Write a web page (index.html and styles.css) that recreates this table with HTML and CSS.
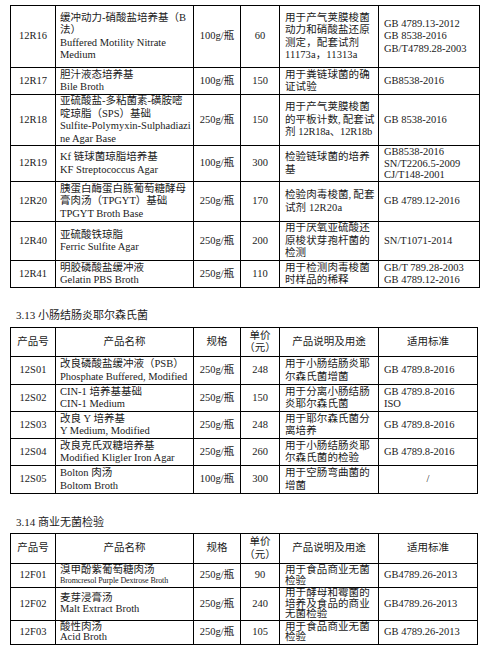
FILE: index.html
```html
<!DOCTYPE html>
<html lang="zh-CN">
<head>
<meta charset="utf-8">
<title>培养基产品目录</title>
<link rel="stylesheet" href="styles.css">
</head>
<body>
<div class="page">
  <table class="cat wide">
    <colgroup><col class="c1"><col class="c2"><col class="c3"><col class="c4"><col class="c5"><col class="c6"></colgroup>
    <tr class="h62">
      <td class="ctr">12R16</td>
      <td class="name">缓冲动力-硝酸盐培养基（B<br>法）<br>Buffered Motility Nitrate<br>Medium</td>
      <td class="ctr">100g/瓶</td>
      <td class="ctr">60</td>
      <td class="desc">用于产气荚膜梭菌<br>动力和硝酸盐还原<br>测定，配套试剂<br>11173a，11313a</td>
      <td class="std">GB 4789.13-2012<br>GB 8538-2016<br>GB/T4789.28-2003</td>
    </tr>
    <tr class="h27">
      <td class="ctr">12R17</td>
      <td class="name">胆汁液态培养基<br>Bile Broth</td>
      <td class="ctr">100g/瓶</td>
      <td class="ctr">150</td>
      <td class="desc">用于粪链球菌的确<br>证试验</td>
      <td class="std">GB8538-2016</td>
    </tr>
    <tr class="h51">
      <td class="ctr">12R18</td>
      <td class="name">亚硫酸盐-多粘菌素-磺胺嘧<br>啶琼脂（SPS）基础<br>Sulfite-Polymyxin-Sulphadiazi<br>ne Agar Base</td>
      <td class="ctr">250g/瓶</td>
      <td class="ctr">150</td>
      <td class="desc">用于产气荚膜梭菌<br>的平板计数<span class="nc">,</span>配套试<br>剂 <span class="lat">12R18a、12R18b</span></td>
      <td class="std">GB 8538-2016</td>
    </tr>
    <tr class="h36">
      <td class="ctr">12R19</td>
      <td class="name">Kf 链球菌琼脂培养基<br>KF Streptococcus Agar</td>
      <td class="ctr">100g/瓶</td>
      <td class="ctr">300</td>
      <td class="desc">检验链球菌的培养<br>基</td>
      <td class="std tight">GB8538-2016<br>SN/T2206.5-2009<br>CJ/T148-2001</td>
    </tr>
    <tr class="h40">
      <td class="ctr">12R20</td>
      <td class="name">胰蛋白酶蛋白胨葡萄糖酵母<br>膏肉汤（TPGYT）基础<br>TPGYT Broth Base</td>
      <td class="ctr">250g/瓶</td>
      <td class="ctr">170</td>
      <td class="desc">检验肉毒梭菌<span class="nc">,</span>配套<br>试剂 12R20a</td>
      <td class="std">GB 4789.12-2016</td>
    </tr>
    <tr class="h39">
      <td class="ctr">12R40</td>
      <td class="name">亚硫酸铁琼脂<br>Ferric Sulfite Agar</td>
      <td class="ctr">250g/瓶</td>
      <td class="ctr">200</td>
      <td class="desc">用于厌氧亚硫酸还<br>原梭状芽孢杆菌的<br>检测</td>
      <td class="std">SN/T1071-2014</td>
    </tr>
    <tr class="h27">
      <td class="ctr">12R41</td>
      <td class="name">明胶磷酸盐缓冲液<br>Gelatin PBS Broth</td>
      <td class="ctr">250g/瓶</td>
      <td class="ctr">110</td>
      <td class="desc">用于检测肉毒梭菌<br>时样品的稀释</td>
      <td class="std">GB/T 789.28-2003<br>GB 4789.12-2016</td>
    </tr>
  </table>

  <h2 class="sec s1">3.13 小肠结肠炎耶尔森氏菌</h2>
  <table class="cat">
    <colgroup><col class="c1"><col class="c2"><col class="c3"><col class="c4"><col class="c5"><col class="c6"></colgroup>
    <tr class="h29 head">
      <td>产品号</td>
      <td>产品名称</td>
      <td>规格</td>
      <td>单价<br>（元）</td>
      <td>产品说明及用途</td>
      <td>适用标准</td>
    </tr>
    <tr class="h28">
      <td class="ctr">12S01</td>
      <td class="name">改良磷酸盐缓冲液（PSB）<br>Phosphate Buffered, Modified</td>
      <td class="ctr">250g/瓶</td>
      <td class="ctr">248</td>
      <td class="desc">用于小肠结肠炎耶<br>尔森氏菌增菌</td>
      <td class="std">GB 4789.8-2016</td>
    </tr>
    <tr class="h27">
      <td class="ctr">12S02</td>
      <td class="name">CIN-1 培养基基础<br>CIN-1 Medium</td>
      <td class="ctr">250g/瓶</td>
      <td class="ctr">150</td>
      <td class="desc">用于分离小肠结肠<br>炎耶尔森氏菌</td>
      <td class="std">GB 4789.8-2016<br>ISO</td>
    </tr>
    <tr class="h27">
      <td class="ctr">12S03</td>
      <td class="name">改良 Y 培养基<br>Y Medium, Modified</td>
      <td class="ctr">250g/瓶</td>
      <td class="ctr">248</td>
      <td class="desc">用于耶尔森氏菌分<br>离培养</td>
      <td class="std">GB 4789.8-2016</td>
    </tr>
    <tr class="h27">
      <td class="ctr">12S04</td>
      <td class="name">改良克氏双糖培养基<br>Modified Kligler Iron Agar</td>
      <td class="ctr">250g/瓶</td>
      <td class="ctr">260</td>
      <td class="desc">用于小肠结肠炎耶<br>尔森氏菌的检验</td>
      <td class="std">GB 4789.8-2016</td>
    </tr>
    <tr class="h28">
      <td class="ctr">12S05</td>
      <td class="name">Bolton 肉汤<br>Boltom Broth</td>
      <td class="ctr">100g/瓶</td>
      <td class="ctr">300</td>
      <td class="desc">用于空肠弯曲菌的<br>增菌</td>
      <td class="std slash">/</td>
    </tr>
  </table>

  <h2 class="sec s2">3.14 商业无菌检验</h2>
  <table class="cat">
    <colgroup><col class="c1"><col class="c2"><col class="c3"><col class="c4"><col class="c5"><col class="c6"></colgroup>
    <tr class="h30 head">
      <td>产品号</td>
      <td>产品名称</td>
      <td>规格</td>
      <td>单价<br>（元）</td>
      <td>产品说明及用途</td>
      <td>适用标准</td>
    </tr>
    <tr class="h24 tightrow">
      <td class="ctr">12F01</td>
      <td class="name">溴甲酚紫葡萄糖肉汤<br><span class="small">Bromcresol Purple Dextrose Broth</span></td>
      <td class="ctr">250g/瓶</td>
      <td class="ctr">90</td>
      <td class="desc">用于食品商业无菌<br>检验</td>
      <td class="std">GB4789.26-2013</td>
    </tr>
    <tr class="h32 tightrow">
      <td class="ctr">12F02</td>
      <td class="name">麦芽浸膏汤<br>Malt Extract Broth</td>
      <td class="ctr">250g/瓶</td>
      <td class="ctr">240</td>
      <td class="desc">用于酵母和霉菌的<br>培养及食品的商业<br>无菌检验</td>
      <td class="std">GB4789.26-2013</td>
    </tr>
    <tr class="h24 tightrow">
      <td class="ctr">12F03</td>
      <td class="name">酸性肉汤<br>Acid Broth</td>
      <td class="ctr">250g/瓶</td>
      <td class="ctr">105</td>
      <td class="desc">用于食品商业无菌<br>检验</td>
      <td class="std">GB 4789.26-2013</td>
    </tr>
  </table>
</div>
</body>
</html>
```

FILE: styles.css
```css
html, body {
  margin: 0;
  padding: 0;
  background: #ffffff;
}

body {
  font-family: "Liberation Serif", "Noto Sans CJK SC", serif;
  color: #1a1a1a;
  font-size: 10.5px;
}

.page {
  padding: 5px 0 0 10px;
}

.cat {
  border-collapse: collapse;
  table-layout: fixed;
  width: 468px;
}

.cat.wide {
  width: 470px;
}

.c1 { width: 45px; }
.c2 { width: 138px; }
.c3 { width: 47px; }
.c4 { width: 39px; }
.c5 { width: 99px; }

.cat td {
  border: 1px solid #000;
  padding: 0 4px;
  vertical-align: middle;
  line-height: 12.5px;
  overflow: visible;
  white-space: nowrap;
}

.cat td.ctr {
  text-align: center;
  padding: 0;
}

.cat td.name {
  padding-left: 4px;
  padding-right: 0;
}

.cat td.desc {
  padding-left: 5px;
  padding-right: 0;
  letter-spacing: 0.1px;
}

.lat {
  letter-spacing: -0.2px;
}

.nc {
  margin-right: 2px;
}

.cat td.std {
  padding-left: 5px;
  padding-right: 0;
}

.cat td.slash {
  text-align: center;
  padding-left: 0;
}

.cat td.tight {
  line-height: 11.5px;
}

.head td {
  text-align: center;
  padding: 0;
}

.tightrow td {
  line-height: 10.5px;
}

.small {
  font-size: 8px;
  letter-spacing: -0.1px;
}

.h24 { height: 24px; }
.h27 { height: 27px; }
.h28 { height: 28px; }
.h29 { height: 29px; }
.h30 { height: 30px; }
.h32 { height: 32px; }
.h36 { height: 36px; }
.h39 { height: 39px; }
.h40 { height: 40px; }
.h51 { height: 51px; }
.h62 { height: 62px; }

.sec {
  font-size: 11px;
  font-weight: normal;
  line-height: 14px;
  margin: 0;
  padding-left: 6px;
}

.sec.s1 {
  margin-top: 20px;
  margin-bottom: 5px;
}

.sec.s2 {
  margin-top: 21px;
  margin-bottom: 4px;
}
```
